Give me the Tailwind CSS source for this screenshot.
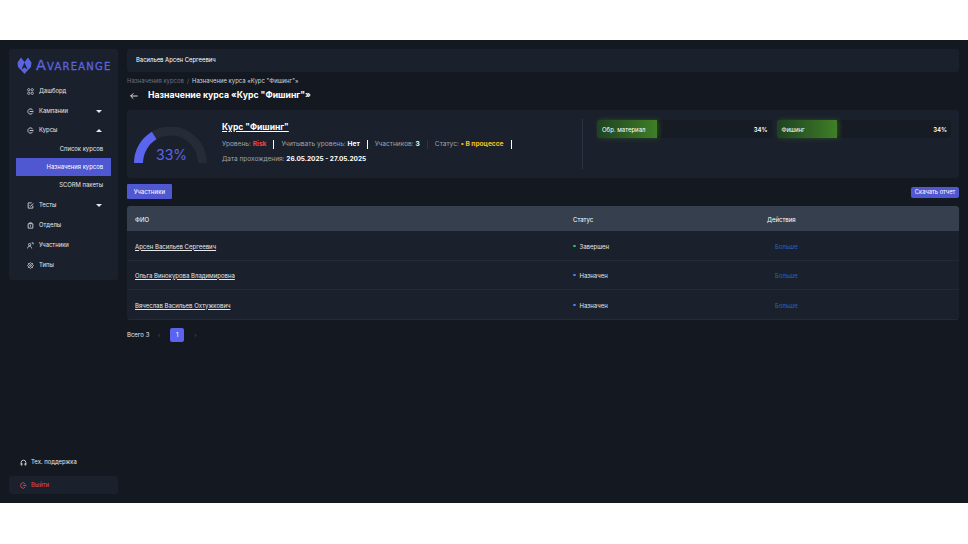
<!DOCTYPE html>
<html lang="ru">
<head>
  <meta charset="UTF-8" />
  <title>Avareange</title>
  <script src="https://cdn.jsdelivr.net/npm/@tailwindcss/browser@4"></script>
</head>
<body class="bg-white h-[544px] w-[968px] overflow-hidden font-['Inter','Noto_Sans',sans-serif]">
  <div class="mt-10 h-[463px] bg-[#141820] flex gap-[9px] px-[9px] py-[9px] text-[6px] text-[#e5e7eb]">

    <!-- Sidebar -->
    <aside class="w-[109px] shrink-0 flex flex-col justify-between">
      <div class="h-[231px] bg-[#1b212c] rounded-[3px] pt-[8px] text-[5.900px]">
        <div class="flex items-center gap-[4px] pl-[8px] h-[17px]">
          <svg class="w-[15px] h-[17px] shrink-0" viewBox="0 0 15 17" fill="#5a63e0"><path d="M0.500 5.500L4 0.500 7.500 5 11 0.500 14.500 5.500 14 10 11 13 7.500 17 4 13 1 10z"/><path d="M7.500 5.500L10.500 12.500 7.500 10.500 4.500 12.500z" fill="#1b212c"/></svg>
          <span class="font-['DejaVu_Sans',sans-serif] text-[#5a63e0] text-[14.500px] tracking-[1.200px] leading-none [font-variant:small-caps] [-webkit-text-stroke:0.3px_#5a63e0] whitespace-nowrap">Avareange</span>
        </div>
        <nav class="mt-[7px] [&>div]:pt-[1px]">
          <div class="h-[20px] flex items-center pl-[18px] gap-[5px]">
            <svg class="w-[7px] h-[7px]" viewBox="0 0 24 24" fill="none" stroke="#d1d5db" stroke-width="2.500"><circle cx="6" cy="6" r="4"/><circle cx="18" cy="6" r="4"/><circle cx="6" cy="18" r="4"/><circle cx="18" cy="18" r="4"/></svg>
            <span>Дашборд</span>
          </div>
          <div class="h-[19px] flex items-center pl-[18px] pr-[16px] gap-[5px]">
            <svg class="w-[7px] h-[7px]" viewBox="0 0 24 24" fill="none" stroke="#d1d5db" stroke-width="3"><path d="M20 8a9 9 0 1 0 0 8M9 12h13"/></svg>
            <span>Кампании</span>
            <span class="ml-auto w-0 h-0 border-x-[3px] border-x-transparent border-t-[3px] border-t-[#e5e7eb]"></span>
          </div>
          <div class="h-[20px] flex items-center pl-[18px] pr-[16px] gap-[5px]">
            <svg class="w-[7px] h-[7px]" viewBox="0 0 24 24" fill="none" stroke="#d1d5db" stroke-width="3"><path d="M20 8a9 9 0 1 0 0 8M9 12h13"/></svg>
            <span>Курсы</span>
            <span class="ml-auto w-0 h-0 border-x-[3px] border-x-transparent border-b-[3px] border-b-[#e5e7eb]"></span>
          </div>
          <div class="h-[18px] flex items-center justify-end pr-[15px]">Список курсов</div>
          <div class="h-[18px] mx-[7px] bg-[#4f57d1] flex items-center justify-end pr-[8px] text-white">Назначения курсов</div>
          <div class="h-[18px] flex items-center justify-end pr-[15px]">SCORM пакеты</div>
          <div class="h-[21px] flex items-center pl-[18px] pr-[16px] gap-[5px]">
            <svg class="w-[7px] h-[7px]" viewBox="0 0 24 24" fill="none" stroke="#d1d5db" stroke-width="3"><path d="M20 12v9H4V3h12M9 12l3 3 9-10"/></svg>
            <span>Тесты</span>
            <span class="ml-auto w-0 h-0 border-x-[3px] border-x-transparent border-t-[3px] border-t-[#e5e7eb]"></span>
          </div>
          <div class="h-[20px] flex items-center pl-[18px] gap-[5px]">
            <svg class="w-[7px] h-[7px]" viewBox="0 0 24 24" fill="none" stroke="#d1d5db" stroke-width="3"><path d="M8 6V3h8v3M4 6h16v15H4zM12 11v5"/></svg>
            <span>Отделы</span>
          </div>
          <div class="h-[20px] flex items-center pl-[18px] gap-[5px]">
            <svg class="w-[7px] h-[7px]" viewBox="0 0 24 24" fill="none" stroke="#d1d5db" stroke-width="3"><circle cx="9" cy="9" r="4"/><path d="M2 22c1-6 4-8 7-8s6 2 7 8M16 3h5v5"/></svg>
            <span>Участники</span>
          </div>
          <div class="h-[20px] flex items-center pl-[18px] gap-[5px]">
            <svg class="w-[7px] h-[7px]" viewBox="0 0 24 24" fill="none" stroke="#d1d5db" stroke-width="3"><circle cx="12" cy="12" r="3"/><path d="M12 2l3 3h4v4l3 3-3 3v4h-4l-3 3-3-3H5v-4l-3-3 3-3V5h4z"/></svg>
            <span>Типы</span>
          </div>
        </nav>
      </div>

      <div class="text-[5.900px]">
        <div class="h-[20px] flex items-center pl-[11px] gap-[4px] mb-[4px]">
          <svg class="w-[7px] h-[7px]" viewBox="0 0 24 24" fill="none" stroke="#d1d5db" stroke-width="3"><path d="M4 18v-6a8 8 0 0 1 16 0v6M4 15h3v6H4zM17 15h3v6h-3z"/></svg>
          <span>Тех. поддержка</span>
        </div>
        <div class="h-[18px] bg-[#1b212c] rounded-[3px] flex items-center pl-[11px] gap-[4px] text-[#e5484d]">
          <svg class="w-[7px] h-[7px]" viewBox="0 0 24 24" fill="none" stroke="#e5484d" stroke-width="3"><path d="M18 7a9 9 0 1 0 0 10M10 12h12"/></svg>
          <span>Выйти</span>
        </div>
      </div>
    </aside>

    <!-- Main -->
    <main class="flex-1 min-w-0">
      <div class="h-[23px] bg-[#1b212c] rounded-[3px] flex items-center pl-[9px] text-white text-[5.900px]">Васильев Арсен Сергеевич</div>

      <div class="mt-[3px] h-[9px] flex items-center gap-[3px] text-[5.950px] text-[#6b7280] leading-none pt-[2px]">
        <span>Назначения курсов</span><span>/</span><span class="text-[#d1d5db]">Назначение курса «Курс "Фишинг"»</span>
      </div>

      <div class="mt-[4px] h-[16px] flex items-center gap-[10px] pl-[3px] text-white">
        <svg class="w-[8px] h-[8px]" viewBox="0 0 24 24" fill="none" stroke="#fff" stroke-width="2.500"><path d="M23 12H2M10 4l-8 8 8 8"/></svg>
        <span class="text-[8.700px] font-bold">Назначение курса «Курс "Фишинг"»</span>
      </div>

      <section class="mt-[6px] h-[68px] bg-[#1b212c] rounded-[3px] flex items-stretch">
        <div class="w-[94px] shrink-0 relative">
          <svg class="absolute left-[7px] top-[17px] w-[73px] h-[36px]" viewBox="0 0 73 36" fill="none">
            <path d="M4.500 36A32 32 0 0 1 68.500 36" stroke="#252c38" stroke-width="9"/>
            <path d="M4.500 36A32 32 0 0 1 20.200 8.500" stroke="#5b64ee" stroke-width="9"/>
          </svg>
          <span class="absolute left-[29px] top-[36px] text-[14px] leading-[18px] text-[#5b64ee]">33%</span>
        </div>
        <div class="w-[361px] shrink-0 pt-[10px] pl-[1px]">
          <div class="text-[8.500px] font-bold text-white underline leading-[14px]">Курс "Фишинг"</div>
          <div class="mt-[4px] flex items-center text-[#9ca3af] h-[13px] whitespace-nowrap text-[6.600px]">
            <span>Уровень: <b class="text-[#ef4444]">Risk</b></span>
            <span class="mx-[7px] w-px h-[9px] bg-white"></span>
            <span>Учитывать уровень: <b class="text-white">Нет</b></span>
            <span class="mx-[7px] w-px h-[9px] bg-white"></span>
            <span>Участников: <b class="text-white">3</b></span>
            <span class="mx-[7px] w-px h-[9px] bg-[#2b3340]"></span>
            <span>Статус: <b class="text-[#fbbf24]">• В процессе</b></span>
            <span class="ml-[7px] w-px h-[9px] bg-white"></span>
          </div>
          <div class="mt-[2px] text-[#9ca3af] h-[12px] leading-[12px] whitespace-nowrap text-[6.500px]">Дата прохождения: <b class="text-white">26.05.2025 - 27.05.2025</b></div>
        </div>
        <div class="w-px h-[50px] mt-[9px] bg-[#2b3340]"></div>
        <div class="flex-1 flex gap-[5px] pl-[14px] pr-[8px] pt-[10px]">
          <div class="flex-1 h-[18px] bg-[#171b23] flex items-center justify-between rounded-[2px] relative">
            <div class="absolute inset-y-0 left-0 w-[60px] rounded-l-[2px] bg-linear-to-r from-[#1f4220] to-[#3f7f25] shadow-[2px_0_5px_rgba(63,127,37,0.45)]"></div>
            <span class="relative pl-[5px] text-white">Обр. материал</span>
            <span class="relative pr-[4px] text-white font-semibold">34%</span>
          </div>
          <div class="flex-1 h-[18px] bg-[#171b23] flex items-center justify-between rounded-[2px] relative">
            <div class="absolute inset-y-0 left-0 w-[60px] rounded-l-[2px] bg-linear-to-r from-[#1f4220] to-[#3f7f25] shadow-[2px_0_5px_rgba(63,127,37,0.45)]"></div>
            <span class="relative pl-[5px] text-white">Фишинг</span>
            <span class="relative pr-[4px] text-white font-semibold">34%</span>
          </div>
        </div>
      </section>

      <div class="mt-[6px] h-[22px] flex justify-between items-start">
        <button class="w-[45px] h-[15px] bg-[#4f57d1] rounded-[1px] text-white text-[6.200px]">Участники</button>
        <button class="mt-[3px] w-[48px] h-[11px] bg-[#4f57d1] rounded-[2px] text-white text-[5.800px]">Скачать отчет</button>
      </div>

      <div class="rounded-[3px] overflow-hidden">
        <div class="h-[25px] pt-[1px] bg-[#363f4e] grid grid-cols-[438px_194px_1fr] items-center pl-[8px] text-white">
          <span>ФИО</span><span>Статус</span><span>Действия</span>
        </div>
        <div class="h-[30px] pt-[1px] bg-[#1b212c] border-b border-[#242b37] grid grid-cols-[438px_194px_1fr] items-center pl-[8px]">
          <a class="underline text-[#e5e7eb]">Арсен Васильев Сергеевич</a>
          <span class="flex items-center gap-[4px]"><i class="w-[2.500px] h-[2.500px] rounded-full bg-[#22c55e]"></i>Завершен</span>
          <a class="ml-[8px] text-[#2563c9]">Больше</a>
        </div>
        <div class="h-[29px] bg-[#1b212c] border-b border-[#242b37] grid grid-cols-[438px_194px_1fr] items-center pl-[8px]">
          <a class="underline text-[#e5e7eb]">Ольга Винокурова Владимировна</a>
          <span class="flex items-center gap-[4px]"><i class="w-[2.500px] h-[2.500px] rounded-full bg-[#3b82f6]"></i>Назначен</span>
          <a class="ml-[8px] text-[#2563c9]">Больше</a>
        </div>
        <div class="h-[30px] pt-[1px] bg-[#1b212c] border-b border-[#242b37] grid grid-cols-[438px_194px_1fr] items-center pl-[8px]">
          <a class="underline text-[#e5e7eb]">Вячеслав Васильев Охтужкович</a>
          <span class="flex items-center gap-[4px]"><i class="w-[2.500px] h-[2.500px] rounded-full bg-[#3b82f6]"></i>Назначен</span>
          <a class="ml-[8px] text-[#2563c9]">Больше</a>
        </div>
      </div>

      <div class="mt-[7px] h-[15px] flex items-center">
        <span class="w-[22px] whitespace-nowrap">Всего 3</span>
        <span class="ml-[9px] text-[#4b5563]">‹</span>
        <span class="ml-[10px] w-[14px] h-[14px] bg-[#5b64ee] rounded-[2px] flex items-center justify-center text-white">1</span>
        <span class="ml-[10px] text-[#4b5563]">›</span>
      </div>
    </main>
  </div>
</body>
</html>
